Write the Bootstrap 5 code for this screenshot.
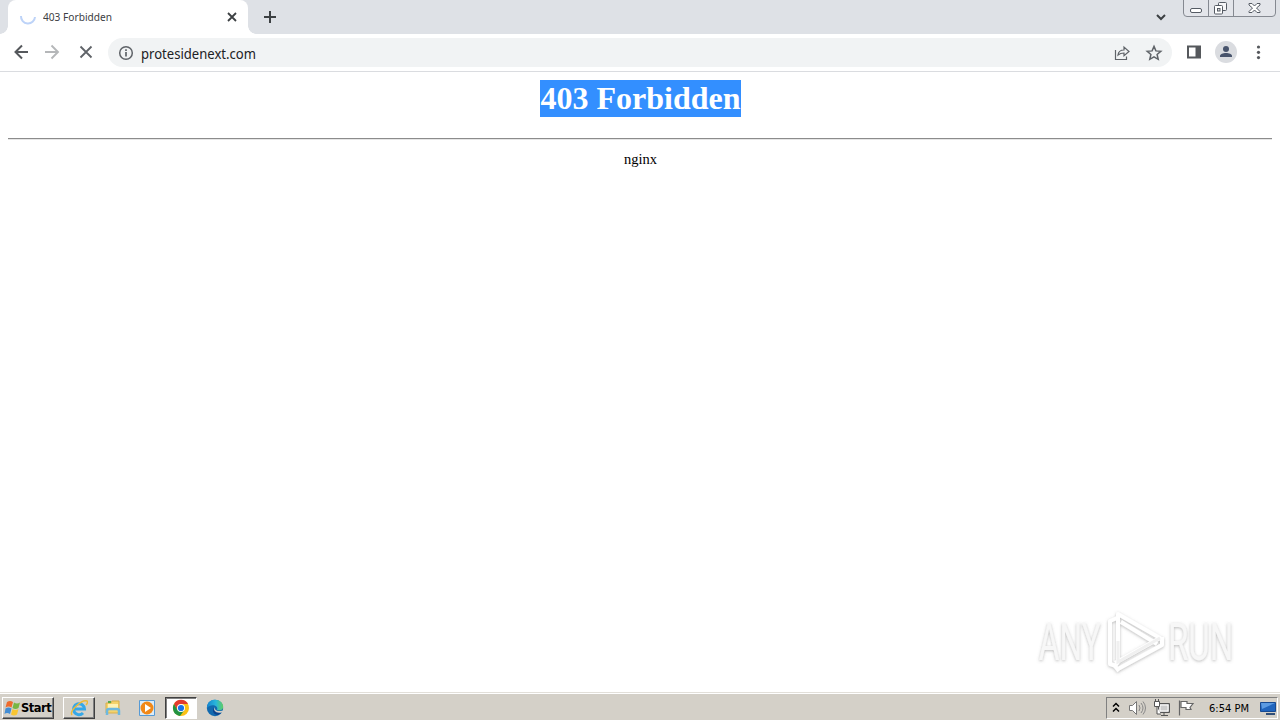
<!DOCTYPE html>
<html lang="en">
<head>
<meta charset="utf-8">
<title>403 Forbidden</title>
<link href="https://cdn.jsdelivr.net/npm/bootstrap@5.3.0/dist/css/bootstrap.min.css" rel="stylesheet">
<style>
body{height:720px;width:1280px;background:#fff;color:#000;font-family:"Liberation Sans",sans-serif}
svg{display:block;flex:none}
.tabstrip{height:34px;background:#dee1e6}
.page-tab{width:240px;height:34px;margin-left:8px;background:#fff;border-radius:8px 8px 0 0;padding-left:11px}
.page-tab::before,.page-tab::after{content:"";position:absolute;bottom:0;width:8px;height:8px}
.page-tab::before{left:-8px;background:radial-gradient(circle at 0 0,transparent 7.5px,#fff 8px)}
.page-tab::after{right:-8px;background:radial-gradient(circle at 100% 0,transparent 7.5px,#fff 8px)}
.tab-label{font:11px/14px "Noto Sans",sans-serif;color:#3c4043}
.toolbar{height:38px;border-bottom:1px solid #dadce0;padding:4px 0 0 12px}
.omnibox{width:1064px;height:29px;background:#f1f3f4;border-radius:15px;margin-left:12px;padding:0 9px 0 9px}
.url{font:14px/18px "Noto Sans",sans-serif;color:#202124}
.doc{padding:8px 8px 0;font-family:"Liberation Serif",serif}
.doc h1{font-size:32px;font-weight:700;line-height:37px;margin:0 0 21px}
.doc h1 span{background:#338fff;color:#fff;display:inline-block;height:37px;width:201px;white-space:nowrap}
.doc hr{margin:0 0 10px;height:2px;border:0;border-top:1px solid #8c8c8c;border-bottom:1px solid #e6e6e6;opacity:1}
.doc p{font-size:14.5px;line-height:18px;margin:0;padding-left:1px}
.watermark{left:1030px;top:602px}
.taskbar{height:28px;background:#d4d0c8;border-top:1px solid #e2dfd9;box-shadow:inset 0 1px #fff;padding:3px 2px 1px}
.raised,.pressed{height:22px;border:1px solid;border-color:#fff #404040 #404040 #fff;box-shadow:inset -1px -1px #808080}
.pressed{background:#fff;border-color:#404040 #fff #fff #404040;box-shadow:inset 1px 1px #808080}
.start{width:52px;font:bold 11.5px/16px "DejaVu Sans",sans-serif;letter-spacing:-.5px;padding-left:1px}
.task{width:32px}
.tray{width:172px;height:22px;border:1px solid;border-color:#808080 #fff #fff #808080;padding-left:5px}
.clock{font:11px/14px "DejaVu Sans",sans-serif;letter-spacing:-.55px;white-space:nowrap}
</style>
</head>
<body class="d-flex flex-column overflow-hidden position-relative">
<header>
<div class="tabstrip d-flex">
  <div class="page-tab position-relative d-flex align-items-center">
    <svg width="18" height="18"><path d="M2 8a7 7 0 0 0 14 1" fill="none" stroke="#bdd3f8" stroke-width="2"/></svg>
    <svg width="182" height="18" style="margin-left:6px"><text class="tab-label" x="0" y="13" textLength="69" lengthAdjust="spacingAndGlyphs" fill="#3c4043">403 Forbidden</text></svg>
    <svg width="14" height="14"><path d="M3 3l8 8m0-8l-8 8" stroke="#3c4043" stroke-width="1.8"/></svg>
  </div>
  <svg class="mt-2" style="margin-left:13px" width="18" height="18"><path d="M9 3v12M3 9h12" stroke="#3c4043" stroke-width="2"/></svg>
  <svg class="ms-auto" style="margin-top:10px;margin-right:15px" width="14" height="14"><path d="M3 5l4 4 4-4" fill="none" stroke="#3c4043" stroke-width="2"/></svg>
  <svg width="93" height="18" style="margin-right:4px">
    <path d="M.5-1v14q0 3.500 3.500 3.500h85q3.500 0 3.500-3.500V-1z" fill="#e3e5ea" stroke="#858991"/><path d="M25.500 0v16M50.500 0v16" stroke="#858991"/>
    <rect x="7.500" y="8.500" width="11" height="4" rx="1.500" fill="#fff" stroke="#555b64"/>
    <rect x="35.500" y="2.500" width="8" height="8" rx="1" fill="#f5f5f7" stroke="#555b64"/><rect x="31.500" y="5.500" width="8" height="8.500" rx="1" fill="#fff" stroke="#555b64"/><rect x="34.500" y="8.500" width="2.500" height="2.500" fill="#ddd" stroke="#555b64"/>
    <path d="M66 3.500h3l2.500 2.500L74 3.500h3v1.500L73.500 8l3.500 3.500v1h-3L71.500 10 69 12.500h-3v-1L69.500 8 66 5z" fill="#fff" stroke="#555b64"/>
  </svg>
</div>
<div class="toolbar d-flex align-items-start">
  <div class="d-flex gap-3" style="padding-top:6px;width:84px;gap:16px">
    <svg width="16" height="16"><g transform="translate(2 0)" fill="none" stroke="#55585c" stroke-width="2"><path d="M14 8H2M8 1.500L1.500 8 8 14.500"/></g></svg>
    <svg class="ms-3" style="margin-left:0!important" width="16" height="16"><path d="M1 8h12M7.500 1.500L14 8l-6.500 6.500" fill="none" stroke="#b5b7b9" stroke-width="1.900"/></svg>
    <svg width="20" height="16"><path d="M4.500 2.500l11 11m0-11l-11 11" stroke="#5f6368" stroke-width="1.800"/></svg>
  </div>
  <div class="omnibox d-flex align-items-center">
    <svg width="18" height="18"><circle cx="9" cy="9" r="6.300" fill="none" stroke="#5f6368" stroke-width="1.500"/><path d="M9 8v4.500M9 5.200v1.700" stroke="#5f6368" stroke-width="1.700"/></svg>
    <svg width="125" height="22" style="margin-left:6px"><text class="url" x="0" y="16.500" textLength="115" lengthAdjust="spacingAndGlyphs" fill="#202124">protesidenext.com</text></svg>
    <svg class="ms-auto" width="18" height="18"><path d="M2.500 6v9.500h11v-3M5 11c.5-4 3-5 6-5V3l5 4.500-5 4.300V9c-2.500 0-4 .3-6 2z" fill="none" stroke="#5f6368" stroke-width="1.200"/></svg>
    <svg width="18" height="18" style="margin-left:14px"><path d="M9 2.400l1.900 4.500 4.900.4-3.700 3.200 1.100 4.800L9 12.800l-4.200 2.500 1.100-4.800-3.700-3.200 4.900-.4z" fill="none" stroke="#5f6368" stroke-width="1.500"/></svg>
  </div>
  <svg width="16" height="16" style="margin:6px 0 0 14px"><path d="M2 2.500h12v11H2z" fill="#fff" stroke="#55585c" stroke-width="2"/><path d="M9.500 2H15v12H9.500z" fill="#55585c"/></svg>
  <svg width="22" height="22" style="margin:3px 0 0 13px"><circle cx="11" cy="11" r="11" fill="#dadce0"/><circle cx="11" cy="8" r="3" fill="#48546c"/><path d="M5 16v-1c0-4 12-4 12 0v1z" fill="#48546c"/></svg>
  <svg width="8" height="18" style="margin:5px 0 0 17px" fill="#55585c"><circle cx="4.500" cy="4" r="1.600"/><circle cx="4.500" cy="9.300" r="1.600"/><circle cx="4.500" cy="14.600" r="1.600"/></svg>
</div>
</header>
<main class="doc text-center flex-grow-1">
  <h1><span style="margin-left:1px">403 Forbidden</span></h1>
  <hr>
  <p>nginx</p>
</main>
<div class="watermark position-absolute" aria-label="Any Run">
<svg width="215" height="78" viewBox="0 0 215 78">
  <defs><filter id="shade" x="-10%" y="-10%" width="120%" height="125%"><feDropShadow dx="0" dy="1" stdDeviation="1.6" flood-color="#777" flood-opacity=".5"/></filter>
  <linearGradient id="fade" x1="0" x2="0" y1="20" y2="58" gradientUnits="userSpaceOnUse"><stop offset=".52" stop-color="#fff"/><stop offset=".53" stop-color="#eee"/><stop offset="1" stop-color="#f2f2f2"/></linearGradient></defs>
  <g filter="url(#shade)" font-family="Roboto,sans-serif" font-size="50" fill="url(#fade)">
    <g transform="translate(0 57.500)"><text transform="scale(.68 1)" x="13" y="0" font-size="51" textLength="91" lengthAdjust="spacingAndGlyphs" fill="#f7f7f7">ANY</text><text transform="scale(.68 1)" x="203" y="0" font-size="51" textLength="96" lengthAdjust="spacingAndGlyphs" fill="#f7f7f7">RUN</text></g>
    <g fill="none" stroke="#fff" stroke-width="4" stroke-linejoin="round"><path d="M87 16l-7 3v43l6 2"/><path d="M88 60V12l42 24-45 25M91 20l36 22M88 67l44-24v-8M88 60l-3 4 4 5" /></g>
    <path d="M88 39v21l42-24" fill="none" stroke="#f0f0f0" stroke-width="3"/>
  </g>
</svg></div>
<footer class="taskbar d-flex align-items-center">
  <div class="raised start d-flex align-items-center">
    <svg width="17" height="18" viewBox="0 0 17 18"><path d="M3 3q3-2 6 0L7.500 8.500q-3-2-6 0z" fill="#ef6b2d"/><path d="M10 3.500q3 2 6 0L14.500 9q-3 2-6 0z" fill="#78b644"/><path d="M1.500 9.500q3-2 6 0L6 15q-3-2-5.500 0z" fill="#438dd4"/><path d="M8.500 10q3 2 6 0L13 15.500q-3 2-6 0z" fill="#f9c633"/></svg>
    <span>Start</span>
  </div>
  <div class="raised task d-flex align-items-center justify-content-center" style="margin-left:9px">
    <svg width="18" height="18"><path d="M4 10h10.500A5.500 5.500 0 1 0 13 14" fill="none" stroke="#36a8e8" stroke-width="3"/><path d="M2 16C-1 12 12 0 17 2c1 1 0 3-1 4" fill="none" stroke="#edba36" stroke-width="1.500"/></svg>
  </div>
  <svg width="18" height="18" style="margin-left:9px"><path d="M2 4h5l1-2h7v12H2z" fill="#f4d36c" stroke="#d9af4a"/><path d="M4 5h10v4H4z" fill="#fff2b3"/><path d="M4 3h3" stroke="#58a84a" stroke-width="2"/><path d="M3 16v-4q0-2 2-2h8q2 0 2 2v4" fill="none" stroke="#6db8df" stroke-width="2.500"/></svg>
  <svg width="18" height="18" style="margin-left:16px"><path d="M1.500 1.500h15v15h-15z" fill="#dcecf8" stroke="#569ad5"/><circle cx="9" cy="9" r="6.500" fill="#f18818"/><path d="M7 5l6 4-6 4z" fill="#fff"/></svg>
  <div class="pressed task d-flex align-items-center justify-content-center" style="margin-left:9px">
    <svg width="18" height="18" viewBox="0 0 18 18"><circle cx="9" cy="9" r="8" fill="#fbc116"/><path d="M2 5a8 8 0 0 1 14 0H9l-3.500 6z" fill="#e33b2e"/><path d="M2 5a8 8 0 0 0 6 12l4.500-6H5.500z" fill="#229342"/><circle cx="9" cy="9" r="4" fill="#fff"/><circle cx="9" cy="9" r="3.100" fill="#1a73e8"/></svg>
  </div>
  <svg width="18" height="18" viewBox="0 0 18 18" style="margin-left:9px"><defs><linearGradient id="edge"><stop stop-color="#1685cf"/><stop offset=".55" stop-color="#29b6db"/><stop offset="1" stop-color="#62ce62"/></linearGradient></defs><circle cx="9" cy="9" r="8.200" fill="#1269ae"/><path d="M1 9C1 2 6 .8 9 .8c6 0 8.200 4 8.200 7 0 4-4.700 4-6.200 3 2-4-6-7-10-1.800z" fill="url(#edge)"/><path d="M8.500 8c-2 3 1 6 7.500 4-1 2-2 3-4 4-4 0-7-4-3.500-8z" fill="#0c438d"/><path d="M9 8c-1 3 2 5 7.800 3.500l.8 1.500-2 .4C10 15 6.500 11 9 8z" fill="#d4d0c8"/></svg>
  <div class="tray ms-auto d-flex align-items-center">
    <svg width="8" height="14"><path d="M1 5.500l3-3 3 3M1 10.500l3-3 3 3" fill="none" stroke="#000" stroke-width="1.500"/></svg>
    <svg width="19" height="18" style="margin-left:8px"><path d="M1.500 6.500h3l4-4v13l-4-4h-3z" fill="#fff" stroke="#777"/><path d="M11 6q2 3 0 6M13 4q4 5 0 10M15 2.500q5 6.500 0 13" fill="none" stroke="#888"/></svg>
    <svg width="18" height="18" style="margin-left:6px"><path d="M5.500 4.500h11v9h-11z" fill="#bbb" stroke="#555"/><path d="M7 6h8v6H7z" fill="#ccc" stroke="#fff"/><path d="M8 16.500h7M11 13v3" stroke="#555"/><path d="M1.500 2.500h5v5h-5zM2.500 0v3m3-3v3M4 8v7h4" fill="#fff" stroke="#555"/></svg>
    <svg width="18" height="18" style="margin-left:6px"><path d="M2.500 1.500v15M4 2.500h6v2h6l-3 4 1 2H9v-2H4z" fill="#fff" stroke="#666" stroke-width="1.200"/></svg>
    <svg width="42" height="18" style="margin-left:14px"><text class="clock" x="0" y="13" textLength="40" lengthAdjust="spacingAndGlyphs" style="letter-spacing:0">6:54 PM</text></svg>
    <svg width="18" height="18" style="margin-left:8px"><path d="M1.500 3.500h15v9h-15z" fill="#2165bd" stroke="#184a91"/><path d="M2 4h14L3 10z" fill="#5c9be2"/><path d="M7 14h9v2H7z" fill="#314f78"/></svg>
  </div>
</footer>
<script src="https://cdn.jsdelivr.net/npm/bootstrap@5.3.0/dist/js/bootstrap.bundle.min.js"></script>
</body>
</html>
